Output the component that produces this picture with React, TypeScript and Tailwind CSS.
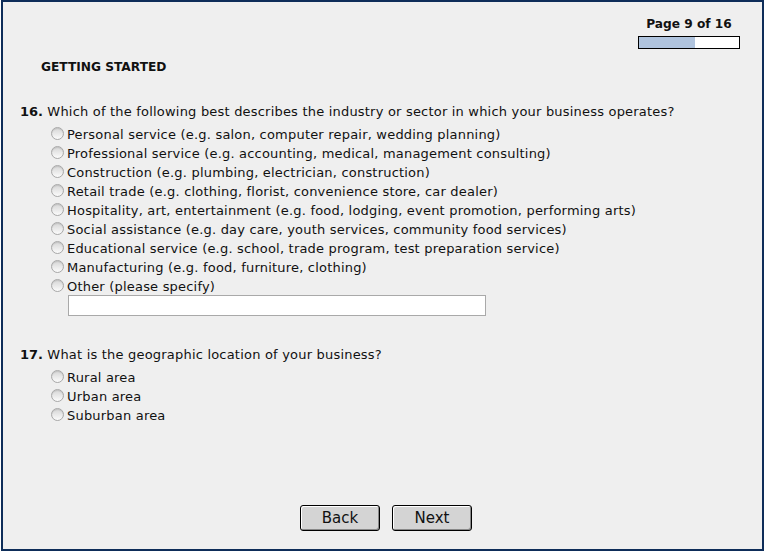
const industries = [
  "Personal service (e.g. salon, computer repair, wedding planning)",
  "Professional service (e.g. accounting, medical, management consulting)",
  "Construction (e.g. plumbing, electrician, construction)",
  "Retail trade (e.g. clothing, florist, convenience store, car dealer)",
  "Hospitality, art, entertainment (e.g. food, lodging, event promotion, performing arts)",
  "Social assistance (e.g. day care, youth services, community food services)",
  "Educational service (e.g. school, trade program, test preparation service)",
  "Manufacturing (e.g. food, furniture, clothing)",
  "Other (please specify)",
];

const locations = ["Rural area", "Urban area", "Suburban area"];

function Radio() {
  return (
    <span className="mt-[-3px] mr-[3px] inline-block h-[13px] w-[13px] shrink-0 rounded-full border border-[#a8a8a8] bg-gradient-to-b from-[#d6d6d6] to-[#fbfbfb] shadow-[inset_0_1px_1px_rgba(0,0,0,0.1)]" />
  );
}

function Option({ label }: { label: string }) {
  return (
    <div className="flex h-[19px] items-center">
      <Radio />
      <span>{label}</span>
    </div>
  );
}

export default function App() {
  return (
    <div
      className="ml-px h-[551px] w-[763px] border-2 border-[#0e2d59] bg-[#efefef] text-[13px] text-[#111]"
      style={{ fontFamily: '"DejaVu Sans", Verdana, sans-serif' }}
    >
      <div className="flex justify-end pt-[14px] pr-[22px]">
        <div className="flex flex-col items-center">
          <div className="text-[12.2px] font-bold leading-[17px]">Page 9 of 16</div>
          <div className="mt-[3px] flex h-[13px] w-[102px] border border-black bg-white">
            <div className="h-full w-[56px] bg-[#b0c4de]" />
          </div>
        </div>
      </div>

      <div className="pl-[38px] pt-[9px] text-[12.2px] font-bold">GETTING STARTED</div>

      <div className="pl-[17px] pt-[27px] tracking-[0.2px]">
        <div className="leading-[18px]">
          <span className="font-bold tracking-normal">16.</span> Which of the following best describes the industry or sector in which your business operates?
        </div>
        <div className="pl-[31px] pt-[4px]">
          {industries.map((label) => (
            <Option key={label} label={label} />
          ))}
          <input
            type="text"
            className="mt-[-1px] ml-[17px] block h-[21px] w-[418px] border border-[#a9a9a9] bg-white"
          />
        </div>

        <div className="pt-[30px] leading-[18px]">
          <span className="font-bold tracking-normal">17.</span> What is the geographic location of your business?
        </div>
        <div className="pl-[31px] pt-[4px]">
          {locations.map((label) => (
            <Option key={label} label={label} />
          ))}
        </div>
      </div>

      <div className="flex justify-center gap-[12px] pt-[80px] pl-[7px]">
        <button className="h-[26px] w-[80px] rounded-[3px] border border-black bg-[#d4d4d4] text-[15px] leading-none shadow-[inset_-1px_-1px_0_#888,inset_1px_1px_0_#fff]">
          Back
        </button>
        <button className="h-[26px] w-[80px] rounded-[3px] border border-black bg-[#d4d4d4] text-[15px] leading-none shadow-[inset_-1px_-1px_0_#888,inset_1px_1px_0_#fff]">
          Next
        </button>
      </div>
    </div>
  );
}
